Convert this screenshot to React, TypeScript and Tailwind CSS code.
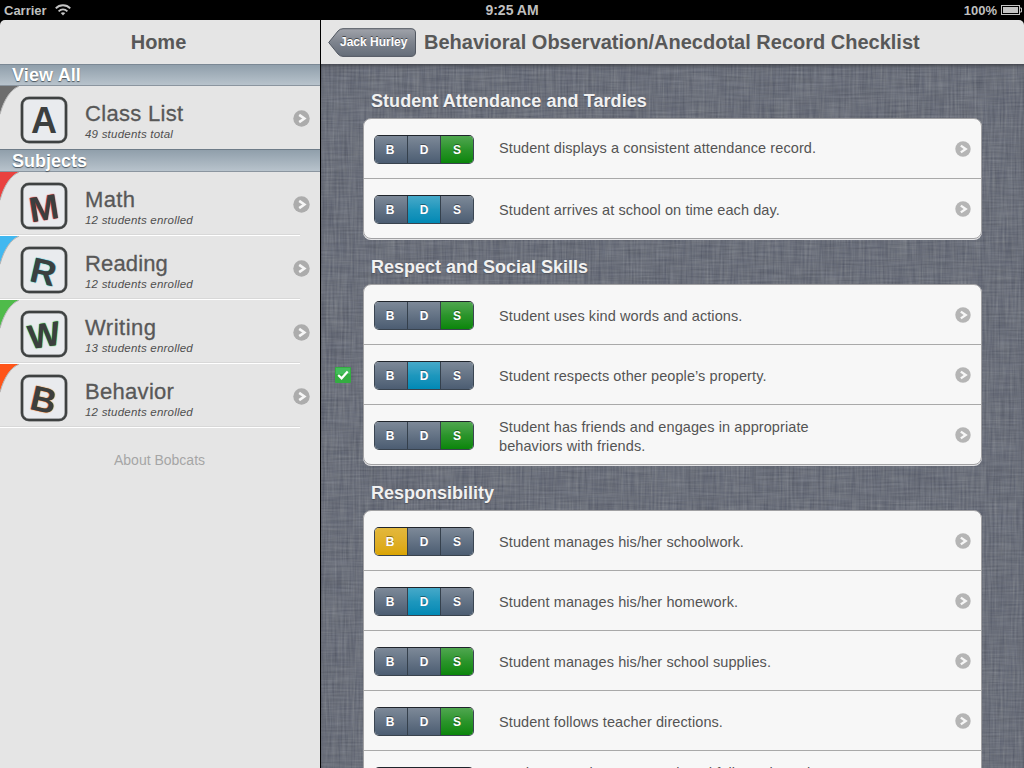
import React from "react";

type Mark = "B" | "D" | "S";
type Item = { text: string; mark: Mark; checked?: boolean };
type Subject = {
  letter: string;
  name: string;
  note: string;
  corner: string;
  letterClass: string;
  nameClass: string;
};

const classList: Subject = {
  letter: "A",
  name: "Class List",
  note: "49 students total",
  corner: "#6d6d6d",
  letterClass: "text-[36px]",
  nameClass: "tracking-[0.3px]",
};

const subjects: Subject[] = [
  { letter: "M", name: "Math", note: "12 students enrolled", corner: "#e9423f", letterClass: "text-[35px] -rotate-[9deg] [text-shadow:0_0_1px_#e02a25,0_0_1px_#e02a25]", nameClass: "tracking-[0.4px]" },
  { letter: "R", name: "Reading", note: "12 students enrolled", corner: "#41b8f0", letterClass: "text-[35px] rotate-[13deg] [text-shadow:0_0_1px_#18b5bd,0_0_1px_#18b5bd]", nameClass: "tracking-[0.15px]" },
  { letter: "W", name: "Writing", note: "13 students enrolled", corner: "#4fbb4a", letterClass: "text-[34px] -rotate-[9deg] [text-shadow:0_0_1px_#22a52a,0_0_1px_#22a52a]", nameClass: "tracking-[0.5px]" },
  { letter: "B", name: "Behavior", note: "12 students enrolled", corner: "#ff5519", letterClass: "text-[35px] rotate-[13deg] [text-shadow:0_0_1px_#f57a1c,0_0_1px_#f57a1c]", nameClass: "tracking-[0.3px]" },
];

const sections: { title: string; items: Item[] }[] = [
  {
    title: "Student Attendance and Tardies",
    items: [
      { text: "Student displays a consistent attendance record.", mark: "S" },
      { text: "Student arrives at school on time each day.", mark: "D" },
    ],
  },
  {
    title: "Respect and Social Skills",
    items: [
      { text: "Student uses kind words and actions.", mark: "S" },
      { text: "Student respects other people’s property.", mark: "D", checked: true },
      { text: "Student has friends and engages in appropriate behaviors with friends.", mark: "S" },
    ],
  },
  {
    title: "Responsibility",
    items: [
      { text: "Student manages his/her schoolwork.", mark: "B" },
      { text: "Student manages his/her homework.", mark: "D" },
      { text: "Student manages his/her school supplies.", mark: "S" },
      { text: "Student follows teacher directions.", mark: "S" },
      { text: "Student completes seatwork and follows through with assigned tasks.", mark: "B" },
    ],
  },
];

function Disclosure({ color, size }: { color: string; size: number }) {
  return (
    <svg width={size} height={size} viewBox="0 0 17 17" className="shrink-0">
      <circle cx="8.5" cy="8.5" r="8.2" fill={color} />
      <path d="M6.2 4.9 L11.4 8.5 L6.2 12.1" fill="none" stroke="#f6f6f6" strokeWidth="2.5" />
    </svg>
  );
}

function SidebarRow({ subject, last }: { subject: Subject; last?: boolean }) {
  return (
    <div className={`relative flex pl-[21px] ${last ? "h-[63px]" : "h-16"}`}>
      <svg className="absolute left-0 top-0" width="24" height="34" viewBox="0 0 24 34">
        <path d="M0 0 H19 C11 3 4 13 0 28 Z" fill={subject.corner} />
        <path d="M19 .3 C11 3.3 4 13.3 0 28.3" fill="none" stroke="#b4b4b4" strokeWidth="1" />
      </svg>
      <div className="relative mt-[11px] flex size-[46px] items-center justify-center rounded-[8px] border-2 border-[#3e4141] bg-[#e9ebee] pt-[2px] shadow-[0_0_0_0.5px_#6a6d6d,inset_0_0_0_0.5px_#6a6d6d]">
        <span className={`block font-bold leading-none text-[#3c3f3f] ${subject.letterClass}`}>{subject.letter}</span>
      </div>
      <div className="ml-[18px] flex-1 pt-[15px]">
        <div className={`h-[26px] text-[22px] leading-[26px] text-[#585858] [-webkit-text-stroke:0.3px_#585858] ${subject.nameClass}`}>{subject.name}</div>
        <div className="text-[11.5px] italic leading-[14px] tracking-[0.22px] text-[#4f4f4f]">{subject.note}</div>
      </div>
      <div className="mr-[10px] mt-6">
        <Disclosure color="#acacac" size={17} />
      </div>
      {!last && <div className="absolute bottom-0 left-0 h-[2px] w-[300px] border-b border-white bg-[#d8d8d8]" />}
    </div>
  );
}

function GroupHeader({ title, className }: { title: string; className: string }) {
  return (
    <div className={`border-b border-[#8b959f] bg-gradient-to-b from-[#909fab] to-[#b8c3cc] pl-3 text-[18px] font-bold text-white [text-shadow:0_1px_1px_#4b555e] ${className}`}>
      {title}
    </div>
  );
}

const activeFill: Record<Mark, string> = {
  B: "bg-gradient-to-b from-[#e3b83c] to-[#dba500]",
  D: "bg-gradient-to-b from-[#45a9c9] via-[#1d97bd] to-[#0089b5]",
  S: "bg-gradient-to-b from-[#4fa74f] via-[#2a942a] to-[#088608]",
};

function Segments({ mark }: { mark: Mark }) {
  return (
    <div className="mt-4 grid h-[29px] w-[100px] grid-cols-[33px_33px_32px] overflow-hidden rounded-[5px] border border-t-[#20252c] border-x-[#3b4653] border-b-[#39434e]">
      {(["B", "D", "S"] as Mark[]).map((m) => (
        <div
          key={m}
          className={`flex items-center justify-center border-r border-[#35404c] text-[12px] font-bold text-white [text-shadow:0_-1px_0_rgba(0,0,0,.4)] first:pr-[2px] last:border-r-0 ${
            m === mark ? activeFill[m] : "bg-gradient-to-b from-[#7d8998] to-[#4c5d72]"
          }`}
        >
          {m}
        </div>
      ))}
    </div>
  );
}

function Card({ items, flush }: { items: Item[]; flush: boolean }) {
  return (
    <div className="ml-[42px] w-[619px] rounded-[8px] border border-[#a1a1a3] bg-[#f7f7f7] shadow-[0_1px_0_#e4e4e6]">
      {items.map((item, i) => (
        <div key={item.text} className="relative flex h-[60px] items-start border-b border-[#a9a9a9] px-[10px] last:h-[59px] last:border-b-0">
          {item.checked && (
            <svg className="absolute -left-[29px] top-[22px]" width="16" height="16" viewBox="0 0 16 16">
              <rect width="16" height="16" rx="1" fill="#34ad41" />
              <rect x="1" y="1" width="14" height="6" fill="#43bd5b" />
              <path d="M3.2 8 L6.6 11.3 L12.7 4.4" fill="none" stroke="#fff" strokeWidth="2.2" />
            </svg>
          )}
          <Segments mark={item.mark} />
          <div className={`ml-[25px] flex h-[59px] w-[325px] items-center ${flush && i === 0 ? "" : item.text.length > 60 ? "pt-[5px]" : "pt-[3px]"}`}>
            <p className="text-[14.5px] leading-[19px] tracking-[0.09px] text-[#545454]">{item.text}</p>
          </div>
          <div className="ml-auto mt-[22px]">
            <Disclosure color="#b5b5b5" size={16} />
          </div>
        </div>
      ))}
    </div>
  );
}

function Linen() {
  return (
    <svg className="absolute inset-0" width="703" height="704">
      <filter id="weft" x="0" y="0" width="100%" height="100%" colorInterpolationFilters="sRGB">
        <feTurbulence type="fractalNoise" baseFrequency="0.03 0.5" numOctaves="2" seed="4" />
        <feColorMatrix values=".24 .02 0 0 .29  .24 .01 0 0 .312  .22 0 .03 0 .355  0 0 0 0 1" />
      </filter>
      <filter id="warp" x="0" y="0" width="100%" height="100%" colorInterpolationFilters="sRGB">
        <feTurbulence type="fractalNoise" baseFrequency="0.5 0.03" numOctaves="2" seed="9" />
        <feColorMatrix values=".28 .02 0 0 .27  .28 .01 0 0 .292  .24 0 .03 0 .345  0 0 0 0 .5" />
      </filter>
      <rect width="703" height="704" fill="#6d707b" />
      <rect width="703" height="704" filter="url(#weft)" />
      <rect width="703" height="704" filter="url(#warp)" />
    </svg>
  );
}

export default function App() {
  return (
    <div className="flex h-[768px] w-[1024px] flex-col overflow-hidden bg-black font-['Liberation_Sans',sans-serif]">
      <div className="grid h-5 grid-cols-3 items-center px-1 text-[13px] font-bold text-[#bfbfbf]">
        <div className="flex items-center gap-2">
          <span>Carrier</span>
          <svg width="16" height="12" viewBox="0 0 16 12" fill="none" stroke="#c4c4c4" className="-mt-[2px]">
            <path d="M.8 4.4 C4.6 .3 11.4 .3 15.2 4.4" strokeWidth="2" />
            <path d="M3.6 7.3 C6.2 4.7 9.8 4.7 12.4 7.3" strokeWidth="1.8" />
            <path d="M5.7 9 Q8 7.3 10.3 9 L8 11.6Z" fill="#c4c4c4" stroke="none" />
          </svg>
        </div>
        <div className="text-center text-[14px]">9:25 AM</div>
        <div className="-mr-[2px] flex items-center justify-end gap-[4px]">
          <span>100%</span>
          <svg width="21" height="10" viewBox="0 0 21 10" className="-mt-[2px]">
            <rect x=".5" y=".5" width="18" height="9" fill="none" stroke="#c4c4c4" />
            <rect x="2" y="2" width="15" height="6" fill="#c4c4c4" />
            <path d="M19 3 H20.5 V7 H19" fill="none" stroke="#c4c4c4" />
          </svg>
        </div>
      </div>
      <div className="flex flex-1 gap-px">
        <aside className="w-[320px] rounded-tl-[5px] bg-[#e5e5e5]">
          <h1 className="flex h-11 items-center justify-center pr-[3px] text-[20px] font-bold text-[#585858]">Home</h1>
          <GroupHeader title="View All" className="h-[22px] border-t border-t-[#7b8894] leading-[20px] tracking-[0.12px]" />
          <SidebarRow subject={classList} last />
          <GroupHeader title="Subjects" className="h-[23px] border-t border-t-[#6e7c88] leading-[22px]" />
          {subjects.map((s) => (
            <SidebarRow key={s.name} subject={s} />
          ))}
          <div className="mt-6 pr-px text-center text-[14px] leading-4 text-[#a5a5a5]">About Bobcats</div>
        </aside>
        <main className="flex h-[748px] w-[703px] flex-col overflow-hidden rounded-tr-[5px] bg-[#e5e5e5]">
          <header className="flex h-11 shrink-0 items-center pl-[7px]">
            <div className="relative flex h-[29px] w-[88px] items-center">
              <svg className="absolute inset-0" width="88" height="29" viewBox="0 0 88 29">
                <defs>
                  <linearGradient id="back" x1="0" y1="0" x2="0" y2="1">
                    <stop offset="0" stopColor="#a0a3aa" />
                    <stop offset=".5" stopColor="#7d838d" />
                    <stop offset="1" stopColor="#656d79" />
                  </linearGradient>
                </defs>
                <path d="M15 .7 H83 Q87.5 .7 87.5 5 V24 Q87.5 28.4 83 28.4 H15 Q12 28.4 10 26 L.7 14.5 L10 3 Q12 .7 15 .7Z" fill="url(#back)" stroke="#515761" />
              </svg>
              <span className="relative ml-3 whitespace-nowrap text-[12px] font-bold text-white [text-shadow:0_-1px_0_rgba(0,0,0,.5)]">Jack Hurley</span>
            </div>
            <h2 className="ml-[8px] whitespace-nowrap text-[20px] font-bold text-[#585858]">Behavioral Observation/Anecdotal Record Checklist</h2>
          </header>
          <div className="relative h-[704px] overflow-hidden">
            <Linen />
            <div className="relative pt-[26px] shadow-[inset_0_3px_4px_-2px_#33363c]">
              {sections.map((s, i) => (
                <section key={s.title}>
                  <h3 className={`mb-[5px] ml-[50px] h-[23px] text-[18px] font-bold leading-[23px] text-[#f1f1f1] [text-shadow:0_1px_1px_#50535c] ${i === 0 ? "tracking-[0.06px]" : ""}`}>{s.title}</h3>
                  <Card items={s.items} flush={i === 0} />
                  <div className="h-[17px]" />
                </section>
              ))}
            </div>
          </div>
        </main>
      </div>
    </div>
  );
}
